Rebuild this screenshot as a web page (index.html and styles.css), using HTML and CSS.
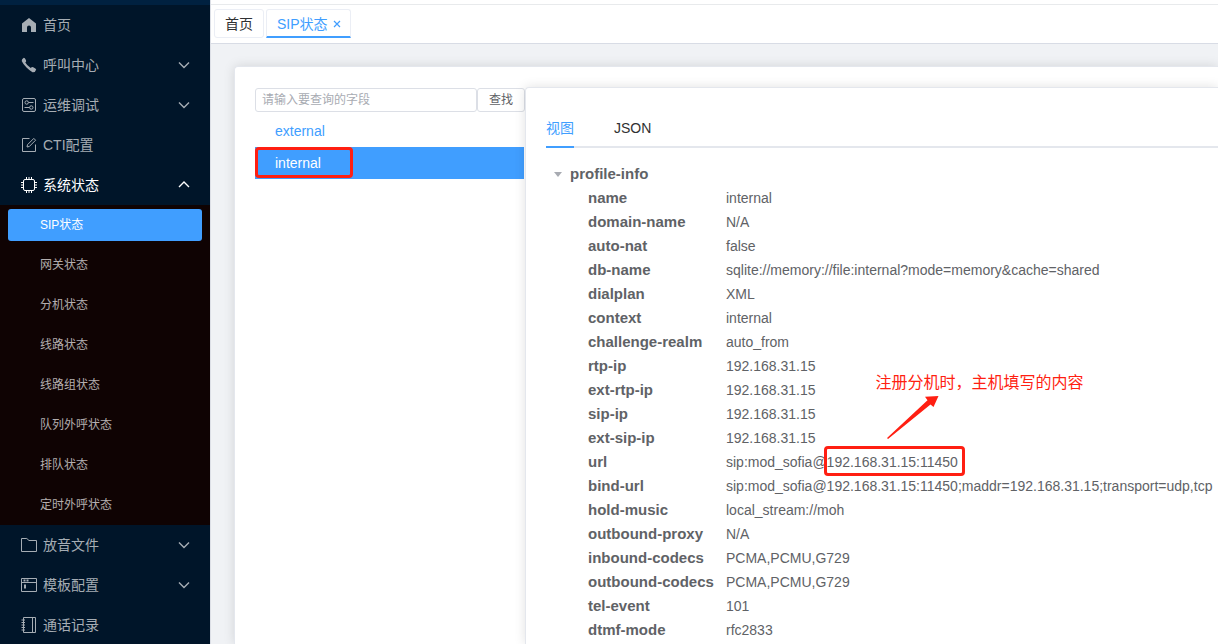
FILE: index.html
```html
<!DOCTYPE html>
<html lang="zh-CN">
<head>
<meta charset="utf-8">
<title>SIP状态</title>
<link rel="stylesheet" href="styles.css">
</head>
<body>
<div class="app">
  <aside class="sidebar">
    <div class="brand"></div>
    <nav class="menu">
      <a class="menu-item" href="#">
        <svg class="icon solid" viewBox="0 0 16 16"><path d="M8 1 L1 6.5 V15 H6 V10.500 Q6 8.500 8 8.500 T10 10.500 V15 H15 V6.500 Z"/></svg>
        <span>首页</span>
      </a>
      <button class="menu-item" type="button">
        <svg class="icon solid" viewBox="0 0 16 16"><path d="M2.800 .8 Q3.800 .8 5 3.200 Q5.600 4.500 4.300 5.600 Q5.500 8 9.700 11 Q11 9.600 12.200 10.200 Q15 11.500 15.200 12.600 Q14.500 15.600 11.500 15.300 Q8.500 13.500 5.500 10.500 Q2 7 .7 4 Q.6 2 2.800 .8Z"/></svg>
        <span>呼叫中心</span>
        <svg class="chevron" viewBox="0 0 12 12"><path d="M1 3.500 L6 8.500 L11 3.500"/></svg>
      </button>
      <button class="menu-item" type="button">
        <svg class="icon" viewBox="0 0 16 16"><rect x="1.500" y="1.500" width="13" height="13" rx="1.500"/><circle cx="5.700" cy="5.500" r="1.700"/><path d="M7.500 5.500 H12.500 M3.500 10.500 H8.500"/><circle cx="10.300" cy="10.500" r="1.700"/></svg>
        <span>运维调试</span>
        <svg class="chevron" viewBox="0 0 12 12"><path d="M1 3.500 L6 8.500 L11 3.500"/></svg>
      </button>
      <a class="menu-item" href="#">
        <svg class="icon" viewBox="0 0 16 16"><path d="M8.500 1.500 H1.500 V14.500 H14.500 V7.500 M6 10 L6.500 7.700 L12.800 1.400 L14.600 3.200 L8.300 9.500 Z"/></svg>
        <span>CTI配置</span>
      </a>
      <button class="menu-item open" type="button" aria-expanded="true">
        <svg class="icon" viewBox="0 0 16 16"><rect x="2.500" y="2.500" width="11" height="11" rx="1.500"/><path d="M5.500 0 V3 M8 0 V3 M10.500 0 V3 M5.500 13 V16 M8 13 V16 M10.500 13 V16 M0 5.500 H3 M0 8 H3 M0 10.500 H3 M13 5.500 H16 M13 8 H16 M13 10.500 H16"/></svg>
        <span>系统状态</span>
        <svg class="chevron" viewBox="0 0 12 12"><path d="M1 8 L6 3 L11 8"/></svg>
      </button>
      <div class="submenu">
        <a class="sub-item active" href="#">SIP状态</a>
        <a class="sub-item" href="#">网关状态</a>
        <a class="sub-item" href="#">分机状态</a>
        <a class="sub-item" href="#">线路状态</a>
        <a class="sub-item" href="#">线路组状态</a>
        <a class="sub-item" href="#">队列外呼状态</a>
        <a class="sub-item" href="#">排队状态</a>
        <a class="sub-item" href="#">定时外呼状态</a>
      </div>
      <button class="menu-item" type="button">
        <svg class="icon" viewBox="0 0 16 16"><path d="M.5 1.500 H5.800 L8 3.500 H15.500 V14.500 H.5 Z"/></svg>
        <span>放音文件</span>
        <svg class="chevron" viewBox="0 0 12 12"><path d="M1 3.500 L6 8.500 L11 3.500"/></svg>
      </button>
      <button class="menu-item" type="button">
        <svg class="icon" viewBox="0 0 16 16"><path d="M.5 1.500 H15.500 V14.500 H.5 Z M1 5.500 H15"/><path d="M2.500 3.500 H4.500 M5.500 3.500 H7.500 M4 7.500 V11.500" class="thick"/></svg>
        <span>模板配置</span>
        <svg class="chevron" viewBox="0 0 12 12"><path d="M1 3.500 L6 8.500 L11 3.500"/></svg>
      </button>
      <a class="menu-item" href="#">
        <svg class="icon" viewBox="0 0 16 16"><path d="M2.500 .5 H14.500 V15.500 H2.500 Z M11.500 1 V15 M.5 3 H4 M.5 5.500 H4 M.5 8 H4 M.5 10.500 H4 M.5 13 H4"/></svg>
        <span>通话记录</span>
      </a>
    </nav>
  </aside>
  <main class="main">
    <header class="topbar"></header>
    <div class="page-tabs">
      <a class="page-tab" href="#">首页</a>
      <a class="page-tab current" href="#">SIP状态
        <svg class="close" viewBox="0 0 8 8"><path d="M1 1 L7 7 M7 1 L1 7"/></svg>
      </a>
    </div>
    <div class="content">
      <section class="card">
        <div class="profiles">
          <form class="search">
            <input class="search-input" type="text" placeholder="请输入要查询的字段" aria-label="请输入要查询的字段">
            <button class="search-button" type="button">查找</button>
          </form>
          <a class="profile" href="#">external</a>
          <a class="profile selected" href="#">internal<span class="mark profile-mark"></span></a>
        </div>
        <section class="detail">
          <div class="view-tabs" role="tablist">
            <button class="view-tab current" type="button" role="tab" aria-selected="true">视图</button>
            <button class="view-tab" type="button" role="tab" aria-selected="false">JSON</button>
          </div>
          <div class="tree">
            <div class="tree-root"><span class="caret"></span>profile-info</div>
            <dl class="fields">
              <dt>name</dt><dd>internal</dd>
              <dt>domain-name</dt><dd>N/A</dd>
              <dt>auto-nat</dt><dd>false</dd>
              <dt>db-name</dt><dd>sqlite://memory://file:internal?mode=memory&amp;cache=shared</dd>
              <dt>dialplan</dt><dd>XML</dd>
              <dt>context</dt><dd>internal</dd>
              <dt>challenge-realm</dt><dd>auto_from</dd>
              <dt>rtp-ip</dt><dd>192.168.31.15</dd>
              <dt>ext-rtp-ip</dt><dd>192.168.31.15</dd>
              <dt>sip-ip</dt><dd>192.168.31.15</dd>
              <dt>ext-sip-ip</dt><dd>192.168.31.15</dd>
              <dt>url</dt><dd>sip:mod_sofia@<span class="host">192.168.31.15:11450<span class="mark host-mark"></span><svg class="arrow" viewBox="0 0 54 46"><path d="M0 43 L40.500 5.200 L38 1.800 L51.500 1 L46.500 12 L43.500 9.500 L1 44 Z"/></svg><span class="note">注册分机时，主机填写的内容</span></span></dd>
              <dt>bind-url</dt><dd>sip:mod_sofia@192.168.31.15:11450;maddr=192.168.31.15;transport=udp,tcp</dd>
              <dt>hold-music</dt><dd>local_stream://moh</dd>
              <dt>outbound-proxy</dt><dd>N/A</dd>
              <dt>inbound-codecs</dt><dd>PCMA,PCMU,G729</dd>
              <dt>outbound-codecs</dt><dd>PCMA,PCMU,G729</dd>
              <dt>tel-event</dt><dd>101</dd>
              <dt>dtmf-mode</dt><dd>rfc2833</dd>
            </dl>
          </div>
        </section>
      </section>
    </div>
  </main>
</div>
</body>
</html>
```
FILE: styles.css
```css
* { box-sizing: border-box; }
body {
  margin: 0;
  font: 14px/24px "Liberation Sans", "Noto Sans CJK SC", sans-serif;
  color: #606266;
}
a { color: inherit; text-decoration: none; }
button, input { font: inherit; color: inherit; }
.app { display: flex; height: 100vh; overflow: hidden; }

.sidebar { flex: 0 0 210px; background: #001529; overflow: hidden; }
.brand { height: 5px; background: #002140; }
.menu { display: flex; flex-direction: column; }
.menu-item {
  display: flex;
  align-items: center;
  gap: 6px;
  width: 100%;
  height: 40px;
  padding: 0 20px 0 21px;
  border: 0;
  background: none;
  color: #a6adb4;
  text-align: left;
}
.menu-item.open { color: #fff; }
.icon {
  width: 16px;
  height: 16px;
  fill: none;
  stroke: currentColor;
}
.icon.solid { fill: currentColor; stroke: none; }
.thick { stroke-width: 2; }
.chevron {
  width: 12px;
  height: 12px;
  margin-left: auto;
  fill: none;
  stroke: currentColor;
  stroke-width: 1.4;
}
.submenu { background: #0f0303; font-size: 12px; color: #b3aeae; }
.sub-item {
  display: block;
  margin: 0 8px;
  padding: 8px 32px;
}
.sub-item.active {
  margin: 4px 8px;
  padding: 4px 32px;
  border-radius: 3px;
  background: #409eff;
  color: #fff;
}

.main {
  display: flex;
  flex: 1;
  flex-direction: column;
  min-width: 0;
  border-left: 1px solid #dcdfe6;
}
.topbar { flex: 0 0 5px; border-bottom: 1px solid #e8eaec; }
.page-tabs {
  display: flex;
  flex: none;
  gap: 2px;
  padding: 4px 3px 5px;
  border-bottom: 1px solid #d8dce5;
}
.page-tab {
  display: flex;
  align-items: center;
  gap: 5px;
  height: 29px;
  padding: 0 10px;
  border: 1px solid #ebeef5;
  border-radius: 3px;
  color: #303133;
}
.page-tab.current {
  padding: 1px 9px 0 10px;
  border-bottom: 2px solid #409eff;
  border-radius: 3px 3px 0 0;
  color: #409eff;
}
.close { width: 8px; height: 8px; fill: none; stroke: currentColor; stroke-width: 1.2; }

.content {
  display: flex;
  flex: 1;
  min-height: 0;
  padding: 22px 0 0 23px;
  background: #f0f2f5;
  overflow: hidden;
}
.card {
  display: flex;
  flex: 1;
  min-width: 0;
  padding: 20px 0 0 20px;
  border: 1px solid #e4e7ed;
  border-width: 1px 0 0 1px;
  border-radius: 4px 0 0 0;
  background: #fff;
  box-shadow: 0 0 12px rgba(0, 0, 0, 0.12);
}
.profiles { flex: 0 0 270px; }
.search { display: flex; margin: 1px 0 3px; }
.search-input {
  flex: 1;
  min-width: 0;
  height: 24px;
  padding: 0 6px;
  border: 1px solid #dcdfe6;
  border-radius: 3px;
  font-size: 12px;
}
.search-input::placeholder { color: #a8abb2; }
.search-button {
  width: 48px;
  height: 24px;
  padding: 0;
  border: 1px solid #dcdfe6;
  border-radius: 3px;
  background: #fff;
  font-size: 12px;
  line-height: 20px;
}
.profile {
  display: block;
  position: relative;
  padding: 4px 20px;
  margin-right: 1px;
  color: #409eff;
}
.profile.selected { background: #409eff; color: #fff; }
.mark { position: absolute; border: 3px solid #ff1f12; border-radius: 4px; }
.profile-mark { left: 0; top: 0; width: 98px; height: 31px; }

.detail {
  position: relative;
  flex: 1;
  min-width: 0;
  padding: 20px 0 0 20px;
  border: 1px solid #e4e7ed;
  border-width: 1px 0 0 1px;
  border-radius: 4px 0 0 0;
  background: #fff;
  box-shadow: 0 0 12px rgba(0, 0, 0, 0.12);
}
.view-tabs { display: flex; gap: 40px; box-shadow: inset 0 -2px #e4e7ed; }
.view-tab {
  height: 40px;
  padding: 2px 0 0;
  border: 0;
  border-bottom: 2px solid transparent;
  background: none;
  color: #303133;
}
.view-tab.current { border-color: #409eff; color: #409eff; }
.tree { padding: 14px 0 0 8px; }
.tree-root { display: flex; align-items: center; gap: 8px; font-size: 15px; font-weight: bold; }
.caret {
  border: 4px solid transparent;
  border-top: 5px solid #a8abb2;
  border-bottom: 0;
}
.fields {
  display: grid;
  grid-template-columns: 138px 1fr;
  margin: 0;
  padding-left: 34px;
}
.fields dt { font-size: 15px; font-weight: bold; }
.fields dd { margin: 0; white-space: nowrap; }
.host { position: relative; }
.host-mark { left: -3px; top: -8px; width: 141px; height: 30px; }
.arrow { position: absolute; left: 60px; top: -59px; width: 54px; height: 46px; fill: #ff1f12; }
.note { position: absolute; left: 49px; top: -83px; color: #ff1f12; font-size: 16px; }
```
